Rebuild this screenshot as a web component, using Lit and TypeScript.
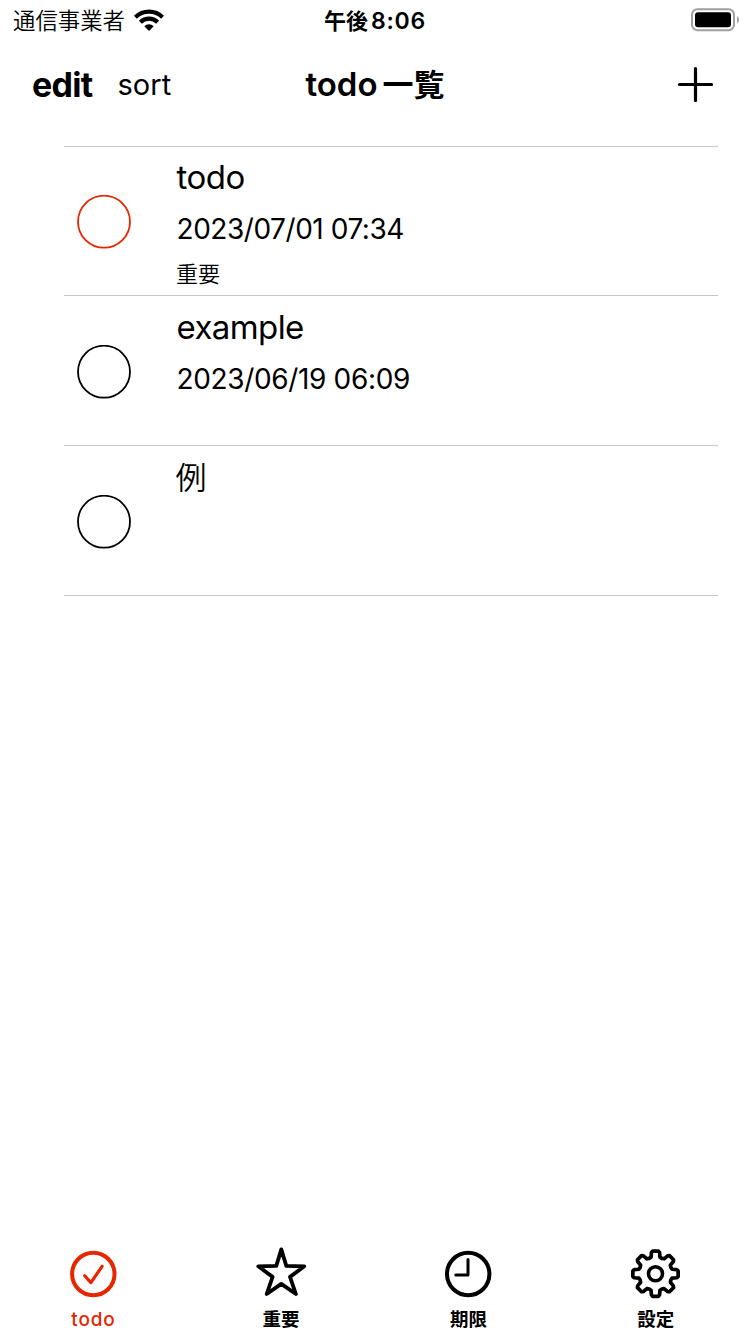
import { LitElement, html, css, svg } from "lit";
import { customElement, property } from "lit/decorators.js";

const gearPath = (cx: number, cy: number): string => {
  const pts: string[] = [];
  for (let i = 0; i < 8; i++) {
    for (const [r, off] of [[17.2, -15], [21.6, -10.8], [22.8, -7.2], [22.8, 7.2], [21.6, 10.8], [17.2, 15], [16.6, 22.5]]) {
      const a = ((i * 45 + off - 90) * Math.PI) / 180;
      pts.push(`${(cx + r * Math.cos(a)).toFixed(2)} ${(cy + r * Math.sin(a)).toFixed(2)}`);
    }
  }
  return `M${pts.join("L")}Z`;
};

const icons: Record<string, unknown> = {
  check: svg`<circle cx="27.3" cy="28" r="21.2" stroke-width="4"/><path d="M18.7 29.7L24.9 36.6L36.1 20.3" stroke-width="3.2"/>`,
  star: svg`<path d="M28.3 3.4L33.3 19.9L51.3 20.3L37 30.9L42.9 48L28.3 37.9L13.7 48L19.6 30.9L5.3 20.3L23.3 19.9Z" stroke-width="3.8"/>`,
  clock: svg`<circle cx="28.2" cy="28" r="21.2" stroke-width="4"/><path d="M28 13.5V29H15.8" stroke-width="3"/>`,
  gear: svg`<path d="${gearPath(27.5, 27.7)}" stroke-width="3.7"/><circle cx="27.5" cy="27.7" r="7" stroke-width="3.6"/>`,
};

@customElement("todo-row")
export class TodoRow extends LitElement {
  @property() title = "";
  @property() date = "";
  @property() tag = "";
  @property({ type: Boolean }) important = false;

  static styles = css`
    :host { display: block; height: 150px; box-sizing: border-box; }
    :host(:first-child) { height: 149px; }
    .row { display: flex; height: 100%; box-sizing: border-box; border-bottom: 1px solid #c6c6c8; }
    .mark { width: 112px; padding: 48px 0 0 13px; box-sizing: border-box; }
    :host(:not(:first-child)) .mark { padding-top: 49px; }
    .mark svg { display: block; fill: none; stroke: #000; }
    .mark.important svg { stroke: #e52600; }
    .text { display: flex; flex-direction: column; white-space: nowrap; color: #000; padding-left: 0.5px; }
    .title { font-size: 33px; line-height: 40px; margin-top: 10px; letter-spacing: -0.5px; }
    :host(:not(:first-child)) .title { margin-top: 11px; letter-spacing: -0.6px; }
    .title.cjk { font-size: 31px; line-height: 42px; letter-spacing: 0; font-weight: 350; margin-left: -1px; }
    .date { font-size: 28px; line-height: 34px; margin-top: 15px; letter-spacing: -0.45px; }
    :host(:not(:first-child)) .date { letter-spacing: -0.35px; }
    .tag { font-size: 22px; line-height: 28px; margin-top: 14px; margin-left: -0.5px; font-weight: 350; }
  `;

  render() {
    return html`<div class="row">
      <div class="mark ${this.important ? "important" : ""}">
        <svg width="54" height="54"><circle cx="27" cy="26.7" r="26" stroke-width="1.8"/></svg>
      </div>
      <div class="text">
        <div class="title ${/^[a-z]/i.test(this.title) ? "" : "cjk"}">${this.title}</div>
        ${this.date ? html`<div class="date">${this.date}</div>` : ""}
        ${this.tag ? html`<div class="tag">${this.tag}</div>` : ""}
      </div>
    </div>`;
  }
}

@customElement("app-root")
export class AppRoot extends LitElement {
  static styles = css`
    :host {
      display: flex; flex-direction: column; width: 750px; height: 1334px; overflow: hidden;
      background: #fff; color: #000;
      font-family: Inter, "Noto Sans CJK JP", sans-serif;
    }
    svg { display: block; }
    .status, .nav { display: grid; grid-template-columns: 1fr auto 1fr; align-items: center; white-space: nowrap; }
    .status { height: 40px; padding: 0 11px 0 13px; }
    .left { display: flex; align-items: center; }
    .right { justify-self: end; }
    .carrier { font-size: 22.4px; line-height: 32px; font-weight: 350; margin: 2px 9.5px 0 0; }
    .time { display: flex; align-items: center; font-size: 22px; font-weight: 600; gap: 3px; margin-right: 2px; }
    .meridiem { line-height: 30px; margin-top: 1px; }
    .clock { font-size: 23px; line-height: 28px; letter-spacing: 0.8px; margin-top: 2px; }
    .nav { height: 88px; padding: 0 37px 0 32px; }
    .edit { font-size: 34px; font-weight: 700; letter-spacing: -0.7px; margin-right: 25px; }
    .sort { font-size: 29px; letter-spacing: 0; }
    .heading { display: flex; align-items: center; font-size: 33px; font-weight: 600; gap: 5px; margin-left: 5px; }
    .kanji { font-size: 31px; line-height: 40px; margin-top: 2px; }
    .list { margin: 18px 32px 0 64px; border-top: 1px solid #c6c6c8; flex: 1; }
    .tabs { display: grid; grid-template-columns: repeat(4, 187.4px); height: 88px; }
    .tab { display: flex; flex-direction: column; align-items: center; font-size: 18.5px; font-weight: 500; }
    .tab.cjk { font-weight: 600; }
    .tab.active { color: #e52600; }
    .icon { fill: none; stroke: currentColor; stroke-linecap: round; stroke-linejoin: round; }
    .label { line-height: 24px; margin-top: 5px; }
    .active .label { font-size: 19px; letter-spacing: 0.8px; margin: 6px 0 0 -0.5px; }
  `;

  private tabs = [
    { icon: "check", label: "todo", active: true },
    { icon: "star", label: "重要" },
    { icon: "clock", label: "期限" },
    { icon: "gear", label: "設定" },
  ];

  render() {
    return html`
      <div class="status">
        <div class="left">
          <span class="carrier">通信事業者</span>
          <svg width="30" height="22" viewBox="0 0 30 22" fill="none" stroke="#000" stroke-width="4.2">
            <path d="M1.4 8.2A19.3 19.3 0 0 1 28.6 8.2"/>
            <path d="M6.4 13.2A12.2 12.2 0 0 1 23.6 13.2"/>
            <path d="M15 22L10.3 17.2A6.7 6.7 0 0 1 19.7 17.2Z" fill="#000" stroke="none"/>
          </svg>
        </div>
        <div class="time"><span class="meridiem">午後</span><span class="clock">8:06</span></div>
        <svg class="right" width="48" height="24" viewBox="0 0 48 24">
          <rect x="1" y="1.2" width="42" height="21" rx="5.5" fill="none" stroke="#a0a0a0" stroke-width="2"/>
          <rect x="4" y="4.2" width="36" height="15" rx="3" fill="#000"/>
          <path d="M46 8Q48 9.2 48 11.7T46 15.3Z" fill="#a0a0a0"/>
        </svg>
      </div>
      <div class="nav">
        <div class="left"><span class="edit">edit</span><span class="sort">sort</span></div>
        <div class="heading"><span>todo</span><span class="kanji">一覧</span></div>
        <svg class="right" width="36" height="36" viewBox="0 0 36 36" stroke="#000" stroke-width="3.2" stroke-linecap="round">
          <path d="M18.5 2.5V34.5M2.5 18.5H34.5"/>
        </svg>
      </div>
      <div class="list">
        <todo-row title="todo" date="2023/07/01 07:34" tag="重要" important></todo-row>
        <todo-row title="example" date="2023/06/19 06:09"></todo-row>
        <todo-row title="例"></todo-row>
      </div>
      <div class="tabs">
        ${this.tabs.map((t) => html`<div class="tab ${t.active ? "active" : "cjk"}">
          <svg class="icon" width="56" height="56" viewBox="0 0 56 56">${icons[t.icon]}</svg>
          <span class="label">${t.label}</span>
        </div>`)}
      </div>
    `;
  }
}
